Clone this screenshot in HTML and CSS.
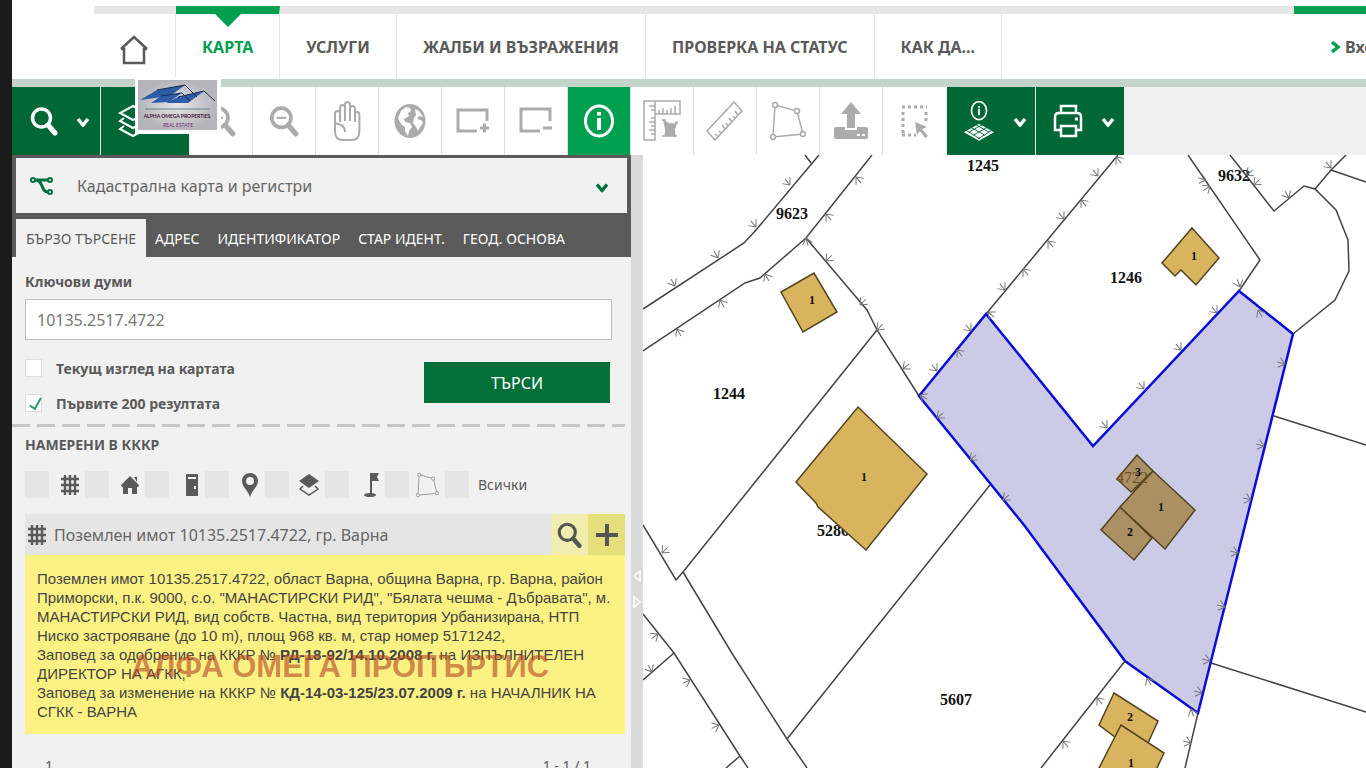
FILE: index.html
```html
<!DOCTYPE html>
<html lang="bg">
<head>
    <meta charset="utf-8">
    <title>Кадастрална карта и регистри</title>
    <link rel="stylesheet" href="styles.css">
</head>
<body>
    <!-- shared icon shapes -->
    <svg class="defs" width="0" height="0" aria-hidden="true">
        <symbol id="i-search" viewBox="0 0 28 30">
            <circle cx="11.500" cy="12" r="9" fill="none" stroke="currentColor" stroke-width="3.500"/>
            <path d="M18 19l7 8" fill="none" stroke="currentColor" stroke-width="5" stroke-linecap="round"/>
        </symbol>
        <symbol id="i-chev" viewBox="0 0 14 10">
            <path d="M2 2l5 6 5-6" fill="none" stroke="currentColor" stroke-width="3.500"/>
        </symbol>
        <symbol id="i-grid" viewBox="0 0 18 20">
            <path d="M4 0v20M9 0v20M14 0v20M0 4h18M0 10h18M0 16h18" fill="none" stroke="currentColor" stroke-width="2.400"/>
        </symbol>
        <symbol id="i-poly" viewBox="0 0 36 40">
            <path d="M5 4l22 6 6 23L3 36z" fill="none" stroke="currentColor" stroke-width="1.500"/>
            <g fill="#fff" stroke="currentColor" stroke-width="1.500">
                <circle cx="5" cy="4" r="2.500"/><circle cx="27" cy="10" r="2.500"/>
                <circle cx="33" cy="33" r="2.500"/><circle cx="3" cy="36" r="2.500"/>
            </g>
        </symbol>
    </svg>

    <div class="page">
        <header class="header">
            <nav class="nav">
                <a class="nav-item home" href="#" aria-label="Начало">
                    <svg width="28" height="30" viewBox="0 0 28 30" fill="none" stroke="#5a5a5a" stroke-width="2.500"><path d="M1 14L14 2l13 12M1 14h3v14h20V14h3"/></svg>
                </a>
                <a class="nav-item active" href="#">КАРТА</a>
                <a class="nav-item" href="#">УСЛУГИ</a>
                <a class="nav-item" href="#">ЖАЛБИ И ВЪЗРАЖЕНИЯ</a>
                <a class="nav-item" href="#">ПРОВЕРКА НА СТАТУС</a>
                <a class="nav-item" href="#">КАК ДА...</a>
            </nav>
            <a class="login" href="#">
                <svg width="11" height="14" viewBox="0 0 11 14"><path d="M2 2l6 5-6 5" fill="none" stroke="#00a050" stroke-width="3.500"/></svg>
                Вход
            </a>
        </header>

        <div class="toolbar">
            <button class="tool wide" aria-label="Търсене">
                <svg width="28" height="30"><use href="#i-search"/></svg>
                <svg class="chev" width="14" height="10"><use href="#i-chev"/></svg>
            </button>
            <button class="tool wide layers" aria-label="Слоеве">
                <svg width="30" height="34" viewBox="0 0 30 34" fill="none" stroke="#fff" stroke-width="2"><path d="M15 2l13 7-13 7L2 9zM6 14l-4 3 13 7 13-7-4-3M6 22l-4 3 13 7 13-7-4-3"/></svg>
                <svg class="chev" width="14" height="10"><use href="#i-chev"/></svg>
            </button>
            <div class="tools">
                <button class="tool" aria-label="Увеличи">
                    <svg width="30" height="32" viewBox="0 0 28 30"><use href="#i-search"/><path d="M7 12h9M11.500 7.500v9" stroke="currentColor" stroke-width="2"/></svg>
                </button>
                <button class="tool" aria-label="Намали">
                    <svg width="30" height="32" viewBox="0 0 28 30"><use href="#i-search"/><path d="M7 12h9" stroke="currentColor" stroke-width="2"/></svg>
                </button>
                <button class="tool" aria-label="Местене">
                    <svg width="28" height="42" viewBox="0 0 28 42" fill="none" stroke="currentColor" stroke-width="2" stroke-linejoin="round"><path d="M2 14q0-3 2.500-3T7 14V8q0-3 2.500-3T12 8V5q0-3 2.500-3T17 5v4q0-3 2.500-3T22 9v6q0-3 2.200-3t2.200 3v16q0 9-8 9H10q-8 0-8-9zM7 13v9M12 7v14M17 8v13M22 14v8M2 23l6 2q4 2 4 7"/></svg>
                </button>
                <button class="tool" aria-label="Цялата карта">
                    <svg width="32" height="36" viewBox="0 0 32 36"><ellipse cx="16" cy="18" rx="15.500" ry="17" fill="currentColor"/><path d="M7 8l5-4 4 1 1 3-3 2 1 3-5 3 1 3 5 1 2 4-3 4-1 5-3-5 0-4-4-3-3-6zM21 6l4 2 4 6-4-1-2 3 4 1 2 3-3 4-2 4-2-4-3-4 1-5 2-3z" fill="#fff"/></svg>
                </button>
                <button class="tool" aria-label="Увеличи с правоъгълник">
                    <svg width="34" height="28" viewBox="0 0 34 28" fill="none" stroke="currentColor" stroke-width="3"><path d="M31 14V3H2v21h19M24 21h9M28.500 16.500v9"/></svg>
                </button>
                <button class="tool" aria-label="Намали с правоъгълник">
                    <svg width="34" height="28" viewBox="0 0 34 28" fill="none" stroke="currentColor" stroke-width="3"><path d="M31 14V2H2v22h19M24 21h9"/></svg>
                </button>
                <button class="tool on" aria-label="Информация">
                    <svg width="30" height="34" viewBox="0 0 30 34" fill="none" stroke="#fff" stroke-width="3"><ellipse cx="15" cy="17" rx="13.500" ry="15"/><path d="M15 14v12M15 8v3.500" stroke-width="4"/></svg>
                </button>
                <button class="tool" aria-label="Измерване">
                    <svg width="38" height="42" viewBox="0 0 38 42" fill="none" stroke="currentColor" stroke-width="1.500"><path d="M1 1h36v13H12v26H1zM12 1v13M12 14V1M8 18h4M6 22h6M8 26h4M6 30h6M8 34h4M16 14v-4M20 14V8M24 14v-4M28 14V8M32 14V6M6 6h6M8 10h4"/><path d="M21 21l5 3h7l-2 6 1 6H22l1-6z" fill="currentColor"/><path d="M19 20h3v3M32 22h2v2M19 36h2M31 36h3"/></svg>
                </button>
                <button class="tool" aria-label="Линия">
                    <svg width="38" height="40" viewBox="0 0 38 40" fill="none" stroke="currentColor" stroke-width="1.600"><path d="M28 1l8 9-27 29-8-9zM12 36l-3-3M15 32l-2-2M19 28l-3-4M22 25l-2-3M26 21l-3-4M29 17l-2-2M32 14l-3-4"/></svg>
                </button>
                <button class="tool" aria-label="Площ">
                    <svg width="36" height="40"><use href="#i-poly"/></svg>
                </button>
                <button class="tool" aria-label="Качване">
                    <svg width="34" height="40" viewBox="0 0 34 40" fill="currentColor"><path d="M17 1L7 13h6v14h8V13h6z"/><path d="M2 26h9v3h12v-3h9q2 0 2 2v8q0 2-2 2H2q-2 0-2-2v-8q0-2 2-2zM23 33v2h3v-2zM28 33v2h3v-2z" fill-rule="evenodd"/></svg>
                </button>
                <button class="tool" aria-label="Избор">
                    <svg width="30" height="36" viewBox="0 0 30 36"><path d="M2 4h25M2 32h14M3 9v21M26 9v12" fill="none" stroke="currentColor" stroke-width="3" stroke-dasharray="3 3"/><path d="M15 19l12 5-5 2 6 7-3 2-5-7-3 4z" fill="currentColor"/></svg>
                </button>
            </div>
            <button class="tool wide" aria-label="Информация за слой">
                <svg width="32" height="44" viewBox="0 0 34 44"><ellipse cx="17" cy="11" rx="8" ry="9.500" fill="none" stroke="#fff" stroke-width="1.800"/><path d="M17 9v7M17 6v2" stroke="#fff" stroke-width="2"/><path d="M17 25l16 9-16 9-16-9z" fill="#fff"/><path d="M7 28l16 9M12 25l16 9M27 28l-16 9M22 25L6 34M2 31l16 10M32 31L16 41" stroke="#006837" stroke-width="1"/></svg>
                <svg class="chev" width="14" height="10"><use href="#i-chev"/></svg>
            </button>
            <button class="tool wide" aria-label="Печат">
                <svg width="30" height="34" viewBox="0 0 30 34" fill="none" stroke="#fff" stroke-width="2.500"><path d="M8 9V2h15v7M8 26H2V13q0-4 4-4h18q4 0 4 4v13h-6M8 22h15v10H8z"/><path d="M22 15h3" stroke-width="3"/></svg>
                <svg class="chev" width="14" height="10"><use href="#i-chev"/></svg>
            </button>
        </div>

        <main class="main">
            <section class="sidebar">
                <div class="dark">
                    <div class="theme">
                        <svg class="theme-icon" width="24" height="20" viewBox="0 0 24 20" fill="none" stroke="#00703c" stroke-width="2"><path d="M4 4h14M5 4q5 0 7 6t6 6" stroke-width="3"/><circle cx="3" cy="4" r="2"/><circle cx="20" cy="4" r="2"/><circle cx="20" cy="16" r="2"/></svg>
                        <select aria-label="Карта"><option>Кадастрална карта и регистри</option></select>
                        <svg class="theme-chev" width="14" height="11" viewBox="0 0 14 10"><use href="#i-chev"/></svg>
                    </div>
                    <div class="tabs">
                        <button class="tab current">БЪРЗО ТЪРСЕНЕ</button>
                        <button class="tab">АДРЕС</button>
                        <button class="tab">ИДЕНТИФИКАТОР</button>
                        <button class="tab">СТАР ИДЕНТ.</button>
                        <button class="tab">ГЕОД. ОСНОВА</button>
                    </div>
                </div>

                <form class="search">
                    <label class="key-label" for="key">Ключови думи</label>
                    <input class="key" id="key" type="text" value="10135.2517.4722">
                    <div class="search-row">
                        <div class="checks">
                            <label class="check"><input type="checkbox">Текущ изглед на картата</label>
                            <label class="check"><input type="checkbox" checked>Първите 200 резултата</label>
                        </div>
                        <button class="submit" type="button">ТЪРСИ</button>
                    </div>
                </form>
                <div class="dashes"></div>

                <div class="results">
                    <h2>НАМЕРЕНИ В КККР</h2>
                    <div class="filters">
                        <label class="filter" aria-label="Поземлени имоти"><input type="checkbox"><svg width="18" height="20"><use href="#i-grid"/></svg></label>
                        <label class="filter" aria-label="Сгради"><input type="checkbox"><svg width="18" height="20" viewBox="0 0 18 20"><path d="M9 1l9 9-1 2h-1v7h-5v-6H7v6H2v-7H1l-1-2zM13 2h3v5z" fill="currentColor"/></svg></label>
                        <label class="filter" aria-label="Обекти в сгради"><input type="checkbox"><svg width="14" height="22" viewBox="0 0 14 22"><path d="M1 0h12v22H1z" fill="currentColor"/><path d="M3 4h8M10 12v3" stroke="#f1f1f1" stroke-width="2"/></svg></label>
                        <label class="filter" aria-label="Адреси"><input type="checkbox"><svg width="18" height="26" viewBox="0 0 18 26"><path d="M9 1c5 0 8 4 8 8 0 6-6 9-8 16C7 18 1 15 1 9c0-4 3-8 8-8zm0 4a4 4 0 000 8 4 4 0 000-8z" fill="currentColor" fill-rule="evenodd"/></svg></label>
                        <label class="filter" aria-label="Слоеве"><input type="checkbox"><svg width="20" height="22" viewBox="0 0 20 22"><path d="M10 0l10 7-10 7L0 7z" fill="currentColor"/><path d="M4 12l-3 3 9 6 9-6-3-3" fill="none" stroke="currentColor" stroke-width="1.500"/></svg></label>
                        <label class="filter" aria-label="Точки"><input type="checkbox"><svg width="16" height="24" viewBox="0 0 16 24"><path d="M7 0h9l-2 4 2 4H9v13H7z" fill="currentColor"/><ellipse cx="7" cy="22" rx="6" ry="2" fill="currentColor"/></svg></label>
                        <label class="filter thin" aria-label="Площи"><input type="checkbox"><svg width="23" height="26"><use href="#i-poly"/></svg></label>
                        <label class="filter all"><input type="checkbox">Всички</label>
                    </div>

                    <article class="item">
                        <div class="item-head">
                            <svg width="18" height="20"><use href="#i-grid"/></svg>
                            <span class="item-title">Поземлен имот 10135.2517.4722, гр. Варна</span>
                            <button class="item-btn" aria-label="Покажи"><svg width="25" height="28" viewBox="0 0 28 30"><use href="#i-search"/></svg></button>
                            <button class="item-btn add" aria-label="Добави"><svg width="24" height="24" viewBox="0 0 24 24"><path d="M1 12h22M12 1v22" stroke="currentColor" stroke-width="4"/></svg></button>
                        </div>
                        <p class="item-text">
                            Поземлен имот 10135.2517.4722, област Варна, община Варна, гр. Варна, район<br>
                            Приморски, п.к. 9000, с.о. "МАНАСТИРСКИ РИД", "Бялата чешма - Дъбравата", м.<br>
                            МАНАСТИРСКИ РИД, вид собств. Частна, вид територия Урбанизирана, НТП<br>
                            Ниско застрояване (до 10 m), площ 968 кв. м, стар номер 5171242,<br>
                            Заповед за одобрение на КККР № <b>РД-18-92/14.10.2008 г.</b> на ИЗПЪЛНИТЕЛЕН<br>
                            ДИРЕКТОР НА АГКК,<br>
                            Заповед за изменение на КККР № <b>КД-14-03-125/23.07.2009 г.</b> на НАЧАЛНИК НА<br>
                            СГКК - ВАРНА
                        </p>
                        <span class="watermark">АЛФА ОМЕГА ПРОПЪРТИС</span>
                    </article>
                    <div class="pager"><span>1</span><span>1 - 1 / 1</span></div>
                </div>
            </section>

            <div class="splitter">
                <svg width="8" height="12" viewBox="0 0 8 12"><path d="M7 1L1 6l6 5z" fill="none" stroke="#fff" stroke-width="1.500"/></svg>
                <svg width="8" height="12" viewBox="0 0 8 12"><path d="M1 1l6 5-6 5z" fill="none" stroke="#fff" stroke-width="1.500"/></svg>
            </div>

            <div class="map">
                <svg viewBox="643 155 723 613" preserveAspectRatio="xMinYMin slice" role="img" aria-label="Карта">
                    <polygon class="parcel" points="986,314 1093,446 1239,291 1293,334 1198,713 1125,661 1024,525 919,396"/>
                    <g class="lines" stroke-width="1.500">
                        <path d="M643 309L744 243 756 230 819 155M805 155l6 8M643 351l102-68 15-5 46-40 66-83M806 238l61 72 10 20 42 66M877 330L683 572l-7 8-33-55M683 572l50 83 54 84 20 29M787 739L990 485M643 614l31 39 66 103 8 12M674 653l-31 27M740 756l-14 12"/>
                        <path d="M986 314l132-159M1188 155l72 105-21 31M1230 155l44 56 30-25 11 3 21 21 12 30 1 31-14 29-42 34M1315 189l16-19 15-15M1331 170l35 12M1274 416l92 29M1211 663l155 49M1198 713l-13 55M1125 661l-84 107"/>
                    </g>
                    <g class="labels">
                        <text x="983" y="171">1245</text>
                        <text x="792" y="219">9623</text>
                        <text x="1126" y="283">1246</text>
                        <text x="1234" y="181">9632</text>
                        <text x="729" y="399">1244</text>
                        <text x="833" y="536">5286</text>
                        <text x="956" y="705">5607</text>
                    </g>
                    <g class="house" stroke-width="1.500">
                        <path d="M781 292l33-19 23 39-34 20zM1192 228l27 30-23 27-15-15-6 6-13-13zM858 407l69 67-61 76-48-43-2-4-20-21zM1114 693l44 28-10 22-33-6-16-12z"/>
                        <path d="M1121 725l43 28-8 17h-58z"/>
                    </g>
                    <g class="house own" stroke-width="1.500">
                        <path d="M1137 455l16 16-22 21-14-13zM1153 471l42 39-30 39-45-42zM1120 507l32 31-18 22-33-30z"/>
                    </g>
                    <text class="own-label" x="1132" y="483">4722</text>
                    <g class="nums">
                        <text x="812" y="304">1</text>
                        <text x="1194" y="260">1</text>
                        <text x="864" y="481">1</text>
                        <text x="1138" y="476">3</text>
                        <text x="1161" y="511">1</text>
                        <text x="1130" y="536">2</text>
                        <text x="1130" y="721">2</text>
                        <text x="1131" y="767">1</text>
                    </g>
                    <polygon class="outline" stroke-width="2.500" points="986,314 1093,446 1239,291 1293,334 1198,713 1125,661 1024,525 919,396"/>
                    <g class="ticks" id="ticks"></g>
                </svg>
            </div>
        </main>

        <div class="logo">
            <svg width="79" height="50" viewBox="0 0 79 50">
                <defs><radialGradient id="lg"><stop offset="0" stop-color="#e6e6ea"/><stop offset="1" stop-color="#b4b4ba"/></radialGradient></defs>
                <rect width="79" height="50" fill="url(#lg)"/>
                <path d="M2 20L19 10l28-5-15 11z" fill="#2d5da8"/><path d="M13 23l10-7 21-3-13 9z" fill="#2d5da8"/><path d="M28 23l12-6 26-6-16 12z" fill="#2d5da8"/>
                <path d="M19 10l28-5 12 12M23 16l21-3 8 8M40 17l26-6 11 10" fill="none" stroke="#1b2c50"/>
                <path d="M7 29h65" stroke="#6c8290"/>
                <text class="logo-name" x="39" y="38">ALPHA OMEGA PROPERTIES</text>
                <text class="logo-sub" x="40" y="47">REAL ESTATE</text>
            </svg>
        </div>
    </div>
    <script src="map.js"></script>
</body>
</html>
```
FILE: styles.css
```css
* {
    box-sizing: border-box;
}
body {
    margin: 0;
    height: 100vh;
    overflow: hidden;
    background: #1c1c1c;
    padding-left: 12px;
    font-family: "Noto Sans", "Open Sans", sans-serif;
    color: #5a5a5a;
}
button, input, select {
    font-family: inherit;
    border: 0;
    margin: 0;
    padding: 0;
    border-radius: 0;
}
button {
    cursor: pointer;
}
a {
    color: inherit;
    text-decoration: none;
}
svg {
    display: block;
    flex: none;
}
.defs {
    position: absolute;
}
.page {
    position: relative;
    height: 100%;
    display: flex;
    flex-direction: column;
    background: #fff;
}

/* top navigation */
.header {
    display: flex;
    padding: 6px 0 0 82px;
    border-bottom: 8px solid #c3d5ca;
    font-weight: bold;
    font-size: 16px;
}
.nav {
    flex: 1;
    display: flex;
    height: 73px;
    border-top: 8px solid #e6e6e6;
}
.nav-item {
    position: relative;
    display: flex;
    align-items: center;
    padding: 0 26px;
    border-right: 1px solid #e6e6e6;
    white-space: nowrap;
}
.nav-item.home {
    padding: 6px 27px 0 26px;
}
.nav-item.active {
    color: #00a050;
    margin-top: -8px;
    border-top: 8px solid #00a050;
}
.nav-item.active::before {
    content: "";
    position: absolute;
    left: 50%;
    top: 0;
    margin-left: -13px;
    border: 13px solid transparent;
    border-top-color: #00a050;
    border-bottom: 0;
}
.login {
    width: 72px;
    display: flex;
    align-items: center;
    gap: 4px;
    padding-left: 36px;
    border-top: 8px solid #00a050;
    overflow: hidden;
}

/* map tools */
.toolbar {
    display: flex;
    gap: 1px;
    height: 68px;
    background: #f0f0f0;
}
.tools {
    display: flex;
    background: #fff;
}
.tool {
    width: 63px;
    display: flex;
    align-items: center;
    justify-content: center;
    background: #fff;
    color: #ababab;
    border-right: 1px solid #dedede;
}
.tool:last-child {
    border-right: 0;
}
.tool.wide {
    width: 88px;
    padding-left: 8px;
    gap: 18px;
    background: #006837;
    color: #fff;
    border: 0;
}
.tool.on {
    background: #00a050;
}
.chev {
    margin-top: 2px;
}

.main {
    flex: 1;
    display: flex;
    min-height: 0;
}
.sidebar {
    flex: 0 1 619px;
    background: #f1f1f1;
    overflow: hidden;
}
.dark {
    background: #5a5a5a;
    padding: 3px 4px 0;
}
.theme {
    position: relative;
    height: 55px;
}
.theme select {
    appearance: none;
    width: 100%;
    height: 100%;
    padding-left: 61px;
    background: #f1f1f1;
    color: #666;
    font-size: 16px;
}
.theme-icon, .theme-chev {
    position: absolute;
    top: 18px;
    left: 14px;
    color: #00703c;
}
.theme-chev {
    top: 24px;
    left: auto;
    right: 18px;
}
.tabs {
    display: flex;
    padding-top: 6px;
}
.tab {
    height: 38px;
    padding: 0 9px;
    background: none;
    color: #fff;
    font-size: 14px;
}
.tab.current {
    padding: 0 10px;
    background: #f1f1f1;
    color: #5a5a5a;
}

/* quick search */
.search {
    padding: 16px 19px 0 13px;
}
.key-label {
    display: block;
    font-size: 14px;
    line-height: 18px;
    font-weight: bold;
}
.key {
    display: block;
    width: 100%;
    height: 41px;
    margin-top: 8px;
    padding: 0 11px;
    border: 1px solid #bebebe;
    background: #fff;
    color: #777;
    font-size: 16px;
}
.search-row {
    display: flex;
    justify-content: space-between;
    padding: 19px 2px 0 0;
}
.checks {
    display: flex;
    flex-direction: column;
    gap: 17px;
}
.check {
    display: flex;
    align-items: center;
    gap: 14px;
    height: 18px;
    font-size: 14px;
    font-weight: bold;
}
.check input {
    appearance: none;
    width: 17px;
    height: 18px;
    background: #fff;
    border: 1px solid #dcdcdc;
}
.check input:checked::after {
    content: "";
    display: block;
    width: 5px;
    height: 11px;
    margin: 1px 6px;
    border: solid #2c9c60;
    border-width: 0 2px 2px 0;
    transform: rotate(30deg);
}
.submit {
    width: 186px;
    height: 41px;
    margin-top: 3px;
    background: #007038;
    color: #fff;
    font-size: 16px;
}
.dashes {
    height: 3px;
    margin: 12px 6px 0 0;
    background: repeating-linear-gradient(90deg, #c6c6c6 0 18px, transparent 18px 25px);
}

.results {
    padding: 8px 6px 0 13px;
}
.results h2 {
    margin: 0;
    font-size: 14px;
    line-height: 20px;
}
.filters {
    display: flex;
    margin-top: 16px;
}
.filter {
    width: 60px;
    height: 27px;
    display: flex;
    align-items: center;
}
.filter input {
    appearance: none;
    flex: none;
    width: 24px;
    height: 27px;
    background: #e5e5e5;
}
.filter svg {
    margin: 0 6px 0 auto;
}
.filter.thin {
    color: #999;
}
.filter.all {
    width: auto;
    gap: 9px;
    font-size: 14px;
}

.item {
    position: relative;
    margin-top: 16px;
}
.item-head {
    display: flex;
    align-items: center;
    height: 41px;
    padding-left: 3px;
    background: #e5e5e5;
}
.item-title {
    flex: 1;
    margin-left: 8px;
    font-size: 16px;
    color: #666;
    white-space: nowrap;
}
.item-btn {
    width: 37px;
    height: 41px;
    display: flex;
    align-items: center;
    justify-content: center;
    background: #f1edaf;
    color: #555;
}
.item-btn.add {
    background: #e5df7b;
}
.item-text {
    margin: 0;
    padding: 14px 0 13px 12px;
    background: #fcf284;
    color: #444;
    font: 15px/19px "Liberation Sans", Arial, sans-serif;
    white-space: nowrap;
}
.watermark {
    position: absolute;
    left: 106px;
    top: 135px;
    font: bold 31px/36px "Liberation Sans", Arial, sans-serif;
    color: rgba(184, 74, 36, .65);
    white-space: nowrap;
}
.pager {
    display: flex;
    justify-content: space-between;
    padding: 22px 34px 0 20px;
    font-size: 14px;
}

.splitter {
    flex: none;
    width: 12px;
    display: flex;
    flex-direction: column;
    align-items: center;
    justify-content: center;
    gap: 14px;
    padding-top: 254px;
    background: #dadada;
}

/* cadastre drawing */
.map {
    flex: 1;
    min-width: 0;
    overflow: hidden;
}
.map svg {
    width: 100%;
    height: 100%;
}
.parcel {
    fill: #cccbe7;
}
.outline {
    fill: none;
    stroke: #0c0cd8;
}
.lines {
    fill: none;
    stroke: #444;
}
.ticks {
    fill: none;
    stroke: #777;
    stroke-width: 1;
}
.house {
    fill: #d8b45f;
    stroke: #52431f;
}
.house.own {
    fill: #ab9063;
}
.labels, .nums, .own-label {
    font: bold 16px "Liberation Serif", "Times New Roman", serif;
    text-anchor: middle;
    fill: #111;
}
.nums {
    font-size: 12px;
}
.own-label {
    font-weight: normal;
    fill: #6e5226;
}

.logo {
    position: absolute;
    left: 123px;
    top: 77px;
    padding: 3px 4px 4px 3px;
    background: #fff;
}
.logo-name, .logo-sub {
    font: bold 5px "Lato", sans-serif;
    text-anchor: middle;
    fill: #4c1038;
}
.logo-sub {
    font-weight: normal;
    fill: #75307a;
}
```
FILE: map.js
```js
// fence marks along the parcel borders: x, y, rotation
const marks = [
    [790, 185, -40], [756, 227, -40], [718, 258, -30], [675, 286, -30],
    [856, 177, 140], [826, 214, 140], [806, 238, 165], [765, 274, 150], [720, 300, 150], [677, 329, 150],
    [826, 261, 45], [860, 305, 45], [877, 330, 45], [903, 369, 50],
    [1005, 290, -40], [971, 331, -40], [937, 371, -40],
    [988, 312, 130], [957, 350, 140], [920, 395, 120],
    [937, 418, 50], [970, 460, 50], [1003, 500, 50],
    [1098, 176, -40], [1064, 219, -40], [1116, 157, 140], [1081, 200, 140], [1048, 241, 140], [1023, 269, 140],
    [1206, 180, -75], [1210, 186, -125], [1246, 175, 55], [1254, 185, 45], [1289, 198, -30], [1331, 168, -40],
    [1240, 287, -20], [1217, 313, -40], [1181, 350, -40], [1144, 389, -40], [1107, 428, -40], [1258, 310, 150],
    [1285, 364, -75], [1264, 446, -75], [1251, 500, -75], [1238, 553, -75], [1225, 607, -75], [1210, 661, -75], [1202, 693, -75], [1191, 743, -75],
    [1147, 678, 150], [1191, 709, 160], [1097, 698, 140], [1063, 741, 140],
    [662, 553, 45], [658, 634, -125], [652, 672, -30], [690, 680, -115], [719, 725, -115]
];

document.getElementById("ticks").innerHTML = marks.map(([x, y, r]) =>
    `<path d="M0 0v-8M0 0l-5-6M0 0l5-6" transform="translate(${x} ${y}) rotate(${r})"/>`
).join("");
```
